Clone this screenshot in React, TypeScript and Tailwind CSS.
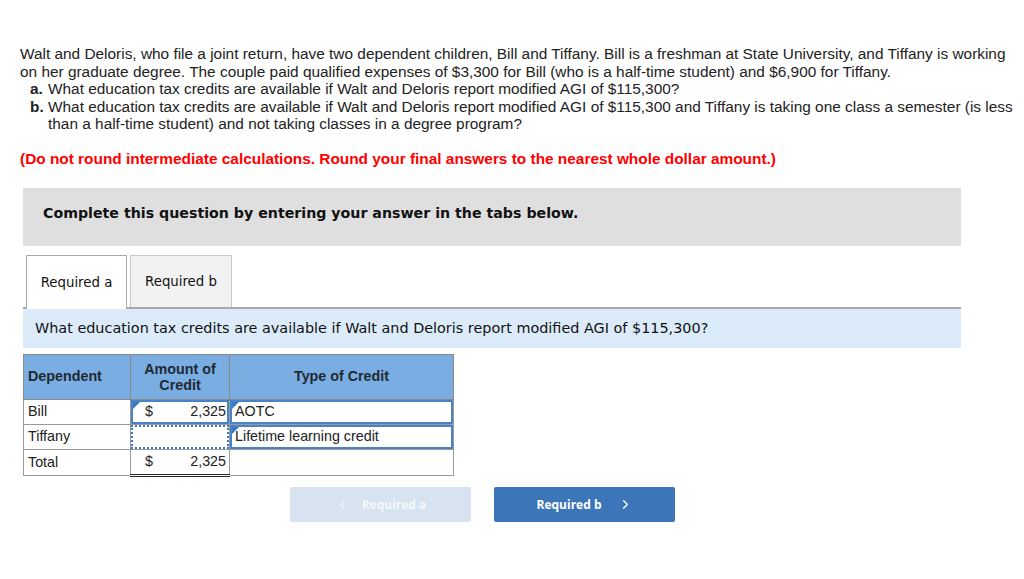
import { ChevronLeft, ChevronRight } from "lucide-react"

const arial = { fontFamily: '"Liberation Sans", Arial, sans-serif' }

function Corner() {
  return (
    <span className="absolute left-0 top-0 h-0 w-0 border-t-[7px] border-r-[7px] border-t-[#3b78c2] border-r-transparent" />
  )
}

export default function App() {
  return (
    <div className="min-h-[579px] bg-white pt-[45px] font-['Liberation_Sans',Arial,sans-serif] text-[#222]">
      {/* Question text */}
      <div className="ml-[20px] w-[1004px] text-[15.4px] leading-[17.5px]">
        <p>
          Walt and Deloris, who file a joint return, have two dependent children, Bill and Tiffany. Bill is a freshman at
          State University, and Tiffany is working on her graduate degree. The couple paid qualified expenses of $3,300 for
          Bill (who is a half-time student) and $6,900 for Tiffany.
        </p>
        <div className="flex pl-[10px]">
          <span className="w-[18px] font-bold">a.</span>
          <span className="flex-1">What education tax credits are available if Walt and Deloris report modified AGI of $115,300?</span>
        </div>
        <div className="flex pl-[10px]">
          <span className="w-[18px] font-bold">b.</span>
          <span className="flex-1">
            What education tax credits are available if Walt and Deloris report modified AGI of $115,300 and Tiffany is
            taking one class a semester (is less than a half-time student) and not taking classes in a degree program?
          </span>
        </div>
        <p className="mt-[17px] font-bold text-[#f00]">
          (Do not round intermediate calculations. Round your final answers to the nearest whole dollar amount.)
        </p>
      </div>

      <div className="ml-[23px] mt-[21px] w-[938px]">
        {/* Instruction box */}
        <div className="h-[58px] bg-[#dfdfdf] pl-[20px] pt-[15px] font-['DejaVu_Sans',Verdana,sans-serif] text-[14.2px] font-bold text-[#111]">
          Complete this question by entering your answer in the tabs below.
        </div>

        {/* Tabs */}
        <div className="mt-[9px] flex items-end border-b-2 border-[#a9a9a9] pl-[3px] font-['DejaVu_Sans',Verdana,sans-serif] text-[13.3px] text-[#111]">
          <div className="-mb-[2px] flex h-[54px] w-[101px] items-center justify-center border border-b-0 border-[#a9a9a9] bg-white">
            Required a
          </div>
          <div className="ml-[3px] flex h-[52px] w-[102px] items-center justify-center border border-b-0 border-[#c9c9c9] bg-[#f2f2f2]">
            Required b
          </div>
        </div>

        <div className="flex h-[39px] items-center bg-[#dbebf9] pl-[12px] font-['DejaVu_Sans',Verdana,sans-serif] text-[14.4px] text-[#111]">
          What education tax credits are available if Walt and Deloris report modified AGI of $115,300?
        </div>

        {/* Answer table */}
        <table className="mt-[6px] w-[431px] border-collapse text-[14.3px]" style={arial}>
          <thead>
            <tr className="h-[45px] bg-[#7aaee2] font-bold text-[#1f2933]">
              <th className="w-[107px] border border-[#8a8a8a] pl-[4px] text-left">Dependent</th>
              <th className="w-[99px] border border-[#8a8a8a] leading-[16px]">
                Amount of
                <br />
                Credit
              </th>
              <th className="border border-[#8a8a8a]">Type of Credit</th>
            </tr>
          </thead>
          <tbody>
            <tr className="h-[25px]">
              <td className="border border-[#9a9a9a] pl-[4px]">Bill</td>
              <td className="border border-[#9a9a9a] p-0">
                <div className="relative flex h-[24px] items-center justify-between border-2 border-[#4a82c6] pl-[12px] pr-[1px]">
                  <Corner />
                  <span>$</span>
                  <span>2,325</span>
                </div>
              </td>
              <td className="border border-[#9a9a9a] p-0">
                <div className="relative flex h-[24px] items-center border-2 border-[#4a82c6] pl-[3px]">
                  <Corner />
                  AOTC
                </div>
              </td>
            </tr>
            <tr className="h-[25px]">
              <td className="border border-[#9a9a9a] pl-[4px]">Tiffany</td>
              <td className="border border-[#9a9a9a] p-0">
                <div className="h-[24px] border-2 border-dotted border-[#3b78c2]" />
              </td>
              <td className="border border-[#9a9a9a] p-0">
                <div className="relative flex h-[24px] items-center border-2 border-[#4a82c6] pl-[3px]">
                  <Corner />
                  Lifetime learning credit
                </div>
              </td>
            </tr>
            <tr className="h-[26px]">
              <td className="border border-[#9a9a9a] pl-[4px]">Total</td>
              <td className="border border-b-[3px] border-[#9a9a9a] border-b-[#222] border-double p-0">
                <div className="flex items-center justify-between pl-[14px] pr-[3px]">
                  <span>$</span>
                  <span>2,325</span>
                </div>
              </td>
              <td className="border border-[#9a9a9a]" />
            </tr>
          </tbody>
        </table>

        {/* Navigation */}
        <div className="ml-[267px] mt-[10px] flex gap-[23px] font-['Open_Sans',sans-serif] text-[12px] font-bold text-white">
          <button className="flex h-[35px] w-[181px] items-center justify-center gap-[12px] rounded-[2px] bg-[#d7e3f1] text-[#f4f7fb]">
            <ChevronLeft className="h-[15px] w-[15px]" strokeWidth={2} />
            Required a
          </button>
          <button className="flex h-[35px] w-[181px] items-center justify-center gap-[16px] rounded-[2px] bg-[#3d76b8]">
            Required b
            <ChevronRight className="h-[15px] w-[15px]" strokeWidth={2} />
          </button>
        </div>
      </div>
    </div>
  )
}
